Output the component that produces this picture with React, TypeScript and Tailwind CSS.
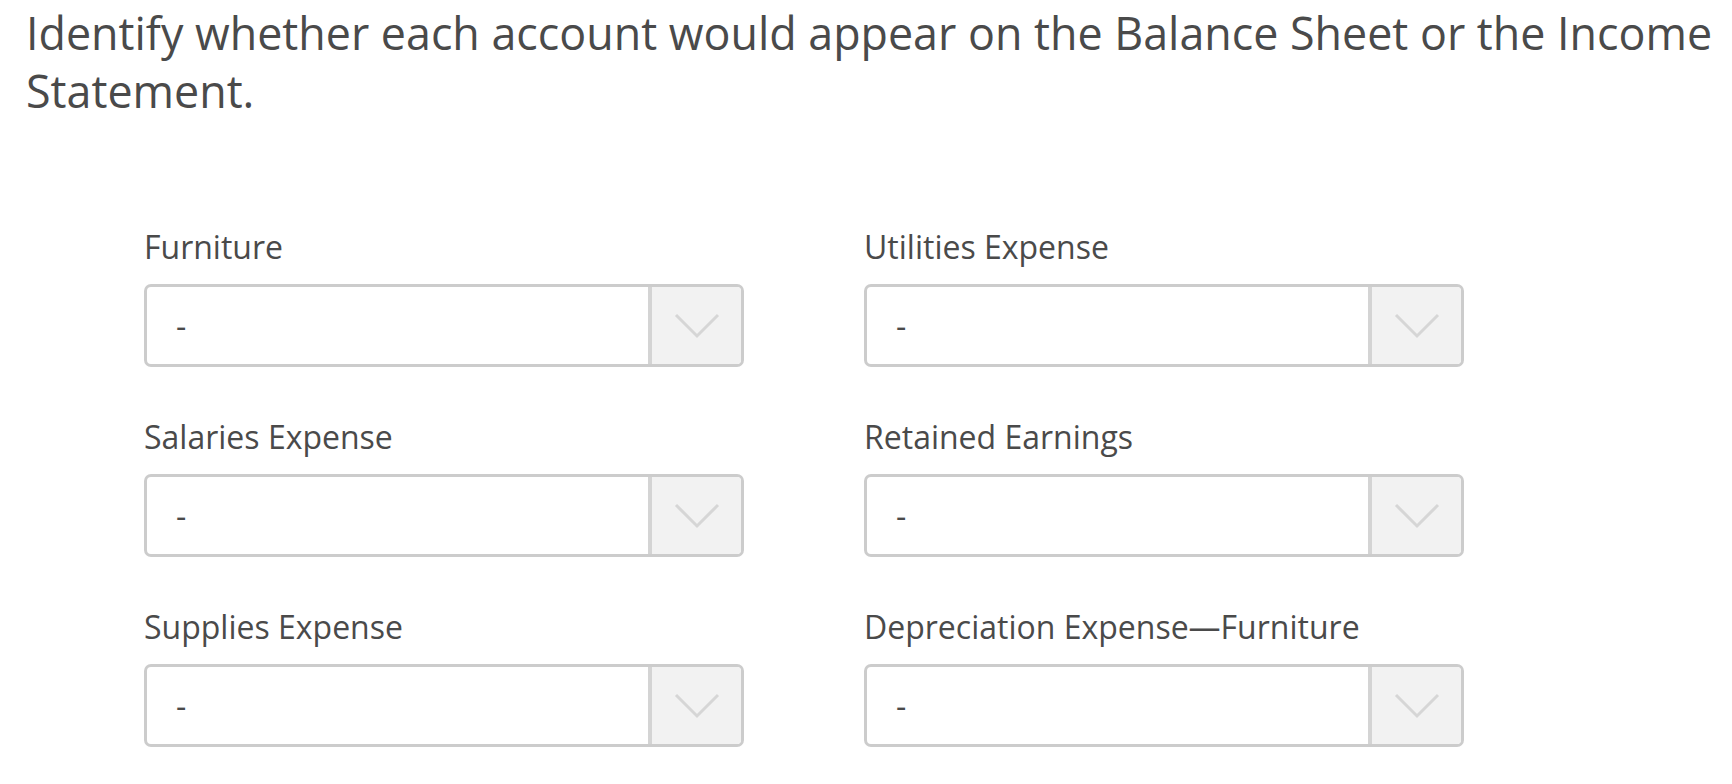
const accounts = [
  'Furniture',
  'Utilities Expense',
  'Salaries Expense',
  'Retained Earnings',
  'Supplies Expense',
  'Depreciation Expense\u2014Furniture',
];

function Chevron() {
  return (
    <svg width="46" height="26" viewBox="0 0 46 26" fill="none">
      <path d="M2 2 L23 23 L44 2" stroke="#d6d6d6" strokeWidth="3" />
    </svg>
  );
}

function AccountSelect({ label }: { label: string }) {
  return (
    <div>
      <div className="text-[32px] leading-[41px] text-[#4a4a4a]">{label}</div>
      <div className="mt-[17px] flex h-[83px] w-[600px] overflow-hidden rounded-[7px] border-[3px] border-[#cccccc] bg-white">
        <div className="flex flex-1 items-center pl-[29px] text-[32px] text-[#4a4a4a]">-</div>
        <div className="flex w-[93px] items-center justify-center border-l-[4px] border-[#d4d4d4] bg-[#f2f2f2]">
          <Chevron />
        </div>
      </div>
    </div>
  );
}

export default function App() {
  return (
    <div className="min-h-screen bg-white pl-[26px] pt-[4px] font-['Open_Sans',sans-serif] text-[#4a4a4a]">
      <h1 className="text-[44.8px] leading-[58px] font-normal">
        Identify whether each account would appear on the Balance Sheet or the Income Statement.
      </h1>
      <div className="ml-[118px] mt-[106px] grid w-[1320px] grid-cols-[600px_600px] gap-x-[120px] gap-y-[49px]">
        {accounts.map((a) => (
          <AccountSelect key={a} label={a} />
        ))}
      </div>
    </div>
  );
}
